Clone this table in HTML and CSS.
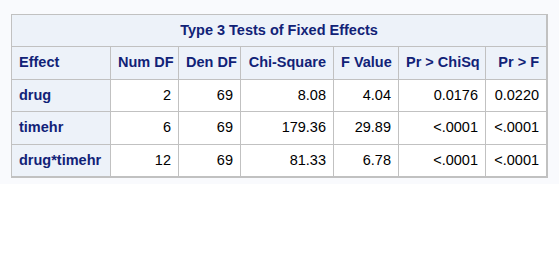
FILE: index.html
```html
<!DOCTYPE html>
<html>
<head>
<meta charset="utf-8">
<link rel="stylesheet" href="styles.css">
</head>
<body>
<div class="band">
<table class="tbl">
<colgroup>
<col class="c1"><col class="c2"><col class="c3"><col class="c4"><col class="c5"><col class="c6"><col class="c7">
</colgroup>
<thead>
<tr><th class="title" colspan="7">Type 3 Tests of Fixed Effects</th></tr>
<tr>
<th class="hl">Effect</th>
<th class="hr">Num DF</th>
<th class="hr">Den DF</th>
<th class="hr">Chi-Square</th>
<th class="hr">F Value</th>
<th class="hr">Pr &gt; ChiSq</th>
<th class="hr">Pr &gt; F</th>
</tr>
</thead>
<tbody>
<tr><th class="hl">drug</th><td>2</td><td>69</td><td>8.08</td><td>4.04</td><td>0.0176</td><td>0.0220</td></tr>
<tr><th class="hl">timehr</th><td>6</td><td>69</td><td>179.36</td><td>29.89</td><td>&lt;.0001</td><td>&lt;.0001</td></tr>
<tr><th class="hl">drug*timehr</th><td>12</td><td>69</td><td>81.33</td><td>6.78</td><td>&lt;.0001</td><td>&lt;.0001</td></tr>
</tbody>
</table>
</div>
</body>
</html>
```
FILE: styles.css
```css
html, body {
  margin: 0;
  padding: 0;
  background: #ffffff;
}
.band {
  background: #f9fafd;
  padding: 14px 11px 6px 11px;
  font-family: "Liberation Sans", Arial, sans-serif;
  font-size: 14.5px;
}
.tbl {
  border-collapse: separate;
  border-spacing: 0;
  border: 1px solid #c1c1c1;
  table-layout: fixed;
  width: 537px;
}
.c1 { width: 99px; }
.c2 { width: 68px; }
.c3 { width: 62px; }
.c4 { width: 93px; }
.c5 { width: 65px; }
.c6 { width: 87px; }
.c7 { width: 61px; }
.tbl th, .tbl td {
  border-right: 1px solid #c1c1c1;
  border-bottom: 1px solid #c1c1c1;
  padding: 7px 7px;
  line-height: 17.4px;
  height: 17.4px;
  white-space: nowrap;
  overflow: hidden;
}
.tbl th {
  background: #edf2f9;
  color: #112277;
  font-weight: bold;
}
.tbl .title {
  text-align: center;
}
.tbl .hl {
  text-align: left;
}
.tbl .hr {
  text-align: right;
}
.tbl td {
  background: #ffffff;
  color: #000000;
  text-align: right;
  font-weight: normal;
}
```
